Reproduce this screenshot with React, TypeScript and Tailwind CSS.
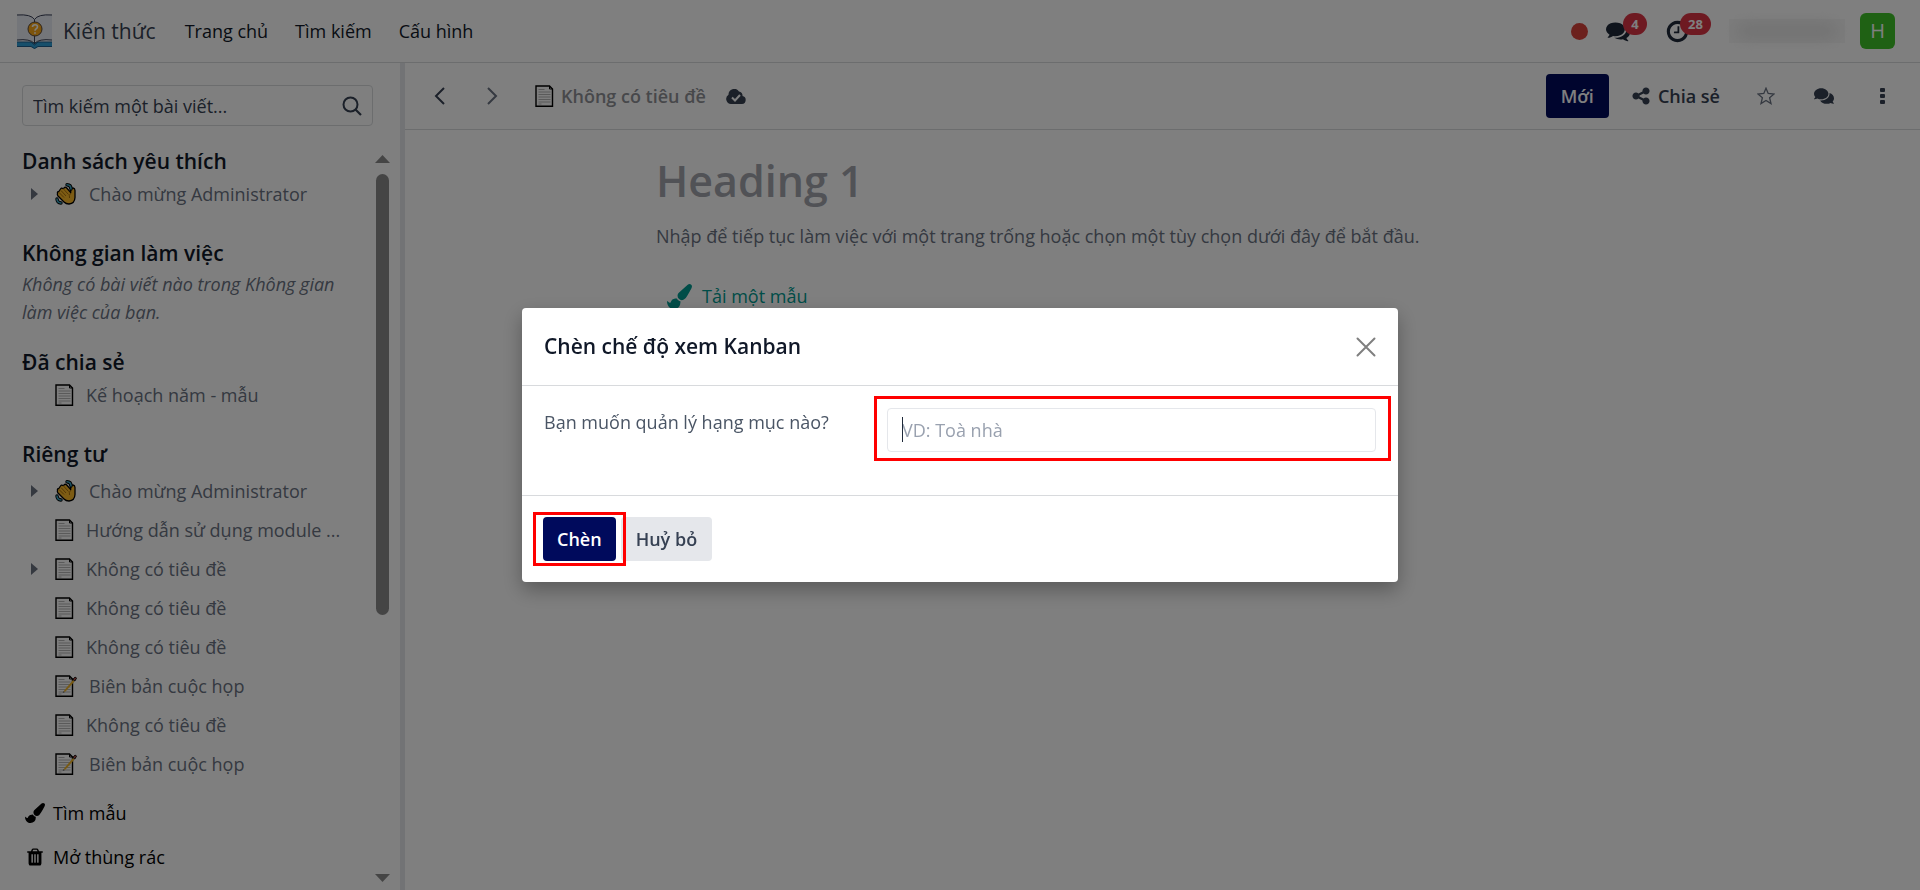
import type { ReactNode } from "react";
import { FaComments } from "react-icons/fa";

type ArticleIcon = "wave" | "page" | "memo";

interface Article {
  title: string;
  icon: ArticleIcon;
  expandable?: boolean;
}

const WELCOME: Article = {
  title: "Chào mừng Administrator",
  icon: "wave",
  expandable: true,
};

const SHARED: Article[] = [{ title: "Kế hoạch năm - mẫu", icon: "page" }];

const PRIVATE: Article[] = [
  WELCOME,
  { title: "Hướng dẫn sử dụng module ...", icon: "page" },
  { title: "Không có tiêu đề", icon: "page", expandable: true },
  { title: "Không có tiêu đề", icon: "page" },
  { title: "Không có tiêu đề", icon: "page" },
  { title: "Biên bản cuộc họp", icon: "memo" },
  { title: "Không có tiêu đề", icon: "page" },
  { title: "Biên bản cuộc họp", icon: "memo" },
];

const GLYPHS = {
  comments:
    "M1408 768q0 139-94 257t-256.5 186.5-353.5 68.5q-86 0-176-16-124 88-278 128-36 9-86 16h-3q-11 0-20.5-8t-11.5-21q-1-3-1-6.5t.5-6.5 2-6l2.5-5 3.5-5.5 4-5 4.5-5 4-4.5q5-6 23-25t26-29.5 22.5-29 25-38.5 20.5-44q-124-72-195-177t-71-224q0-139 94-257t256.5-186.5 353.5-68.5 353.5 68.5 256.5 186.5 94 257zm384 256q0 120-71 224.5t-195 176.5q10 24 20.5 44t25 38.5 22.5 29 26 29.5 23 25q1 1 4 4.5t4.5 5 4 5 3.5 5.5l2.5 5 2 6 .5 6.5-1 6.5q-3 14-13 22t-22 7q-50-7-86-16-154-40-278-128-90 16-176 16-271 0-472-132 58 4 88 4 161 0 309-45t264-129q125-92 192-212t67-254q0-77-23-152 129 71 204 178t75 230z",
  clock:
    "M1024 544v448q0 14-9 23t-23 9h-320q-14 0-23-9t-9-23v-64q0-14 9-23t23-9h224v-352q0-14 9-23t23-9h64q14 0 23 9t9 23zm416 352q0-148-73-273t-198-198-273-73-273 73-198 198-73 273 73 273 198 198 273 73 273-73 198-198 73-273zm224 0q0 209-103 385.5t-279.5 279.5-385.5 103-385.5-103-279.5-279.5-103-385.5 103-385.5 279.5-279.5 385.5-103 385.5 103 279.5 279.5 103 385.5z",
  brush:
    "M1615 0q70 0 122.5 46.5t52.5 116.5q0 63-45 151-332 629-465 752-97 91-218 91-126 0-216.5-92.5t-90.5-219.5q0-128 92-212l638-579q59-54 130-54zm-909 1034q39 76 106.5 130t150.5 76l1 71q4 213-129.5 347t-348.5 134q-123 0-218-46.5t-152.5-127.5-86.5-183-29-220q7 5 41 30t62 44.5 59 36.5 46 17q41 0 55-37 25-66 57.5-112.5t69.5-76 88-47.5 103-25.5 125-10.5z",
  share:
    "M1344 1024q133 0 226.5 93.5t93.5 226.5-93.5 226.5-226.5 93.5-226.5-93.5-93.5-226.5q0-12 2-34l-360-180q-92 86-218 86-133 0-226.5-93.5t-93.5-226.5 93.5-226.5 226.5-93.5q126 0 218 86l360-180q-2-22-2-34 0-133 93.5-226.5t226.5-93.5 226.5 93.5 93.5 226.5-93.5 226.5-226.5 93.5q-126 0-218-86l-360 180q2 22 2 34t-2 34l360 180q92-86 218-86z",
  trash:
    "M704 1376v-704q0-14-9-23t-23-9h-64q-14 0-23 9t-9 23v704q0 14 9 23t23 9h64q14 0 23-9t9-23zm256 0v-704q0-14-9-23t-23-9h-64q-14 0-23 9t-9 23v704q0 14 9 23t23 9h64q14 0 23-9t9-23zm256 0v-704q0-14-9-23t-23-9h-64q-14 0-23 9t-9 23v704q0 14 9 23t23 9h64q14 0 23-9t9-23zm-544-992h448l-48-117q-7-9-17-11h-317q-10 2-17 11zm928 32v64q0 14-9 23t-23 9h-96v948q0 83-47 143.5t-113 60.5h-832q-66 0-113-58.5t-47-141.5v-952h-96q-14 0-23-9t-9-23v-64q0-14 9-23t23-9h309l70-167q15-37 54-63t79-26h320q40 0 79 26t54 63l70 167h309q14 0 23 9t9 23z",
};

function Glyph({ name, className }: { name: keyof typeof GLYPHS; className: string }) {
  return (
    <svg viewBox="0 0 1792 1792" fill="currentColor" className={className} aria-hidden>
      <path d={GLYPHS[name]} />
    </svg>
  );
}

function PageIcon({ memo = false }: { memo?: boolean }) {
  return (
    <svg viewBox="0 0 22 22" className="h-[22px] w-[22px] shrink-0" aria-hidden>
      <path d="M1 1h13.500L17.500 4V21.300H1z" fill="#fafafa" stroke="#000" strokeWidth="1.400" />
      <path d="M14.500 1v3h3" fill="none" stroke="#000" strokeWidth="1" />
      <path
        d="M3.500 4.500h6M3.500 7h12M3.500 9.500h12M3.500 12h12M3.500 14.500h12M3.500 17h12M3.500 19h3"
        stroke="#b4b4b4"
        strokeWidth="1"
      />
      {memo && (
        <>
          <path d="M8.500 17l1-2L18 5l1.500 1.500L10.500 16.500z" fill="#f0b429" />
          <path d="M18 4.500l1.500-2q1.500-.8 2 .8L19.800 6z" fill="#c0504d" stroke="#000" strokeWidth="1" />
          <path d="M7.500 18.200l1-2.200 1.300 1.200z" fill="#777" />
        </>
      )}
    </svg>
  );
}

function WaveIcon() {
  return (
    <svg viewBox="0 0 22 22" className="h-[22px] w-[22px] shrink-0" aria-hidden>
      <path
        d="M2.500 10.500q-.5-1.800 1.300-2L5.500 6q.8-1.500 2.300-.5L9 5q1.200-1.300 2.500-.2l4.200 4.700V7q.3-2.200 2.300-2 2 .3 2 2.500v7q-.3 6-6 6.500-3 0-5-2l-6-6q-1-1.300-.5-2.500z"
        fill="#fbb829"
        stroke="#000"
        strokeWidth="1.300"
        strokeLinejoin="round"
      />
      <path
        d="M4 9.500l5 5M6 7.500l5 5.500M8.500 6l5 5.500M16 10q-2.500 2-1.500 5"
        fill="none"
        stroke="#a8700c"
        strokeWidth="1"
      />
      <g fill="none" strokeLinecap="round">
        <path d="M12 1.800q4 .2 4 4.200M2 16q.2 3.800 4 4" stroke="#000" strokeWidth="3.400" />
        <path d="M12 1.800q4 .2 4 4.200M2 16q.2 3.800 4 4" stroke="#3aa5c4" strokeWidth="1.600" />
      </g>
    </svg>
  );
}

function AppLogo() {
  return (
    <svg viewBox="0 0 35 35" className="h-[35px] w-[35px]" aria-hidden>
      <path d="M0 0h35v27H0z" fill="#e9edf5" />
      <path d="M6 0Q15 .500 17.500 5 20 .500 29 0z" fill="#fff" />
      <path d="M0 28h35v4.500H21L17.500 35 14 32.500H0z" fill="#2f9fd6" />
      <path d="M0 28h14l3.500 3L21 28h14M0 32.500h14l3.500 2 3.500-2h14" stroke="#1f5f8f" fill="none" />
      <path
        d="M0 1q14-1 17.500 4.500Q21 0 35 1M17.500 5.500V9M17.500 21v9M0 26q13-1.500 17.500 3.500Q22 24.500 35 26"
        fill="none"
        stroke="#3c4257"
        strokeWidth="1"
      />
      <circle cx="18" cy="15" r="7" fill="#fba919" stroke="#5c4a3a" />
      <path
        d="M15.500 13q0-2.300 2.500-2.300t2.500 2.100q0 1.200-1.300 2-1.200.7-1.200 2M18 18.300v1.400"
        fill="none"
        stroke="#fff"
        strokeWidth="1.600"
      />
    </svg>
  );
}

function CloudIcon() {
  return (
    <svg viewBox="0 0 20 15" className="h-[15px] w-5" aria-hidden>
      <path
        d="M5 15a5 5 0 0 1-2.500-9.200A5.700 5.700 0 0 1 13 2.500a4 4 0 0 1 3.500 4.600A4 4 0 0 1 16 15z"
        fill="#374151"
      />
      <path d="M6 8.500l3 3 5-5.500" fill="none" stroke="#fff" strokeWidth="2" />
    </svg>
  );
}

function ArticleRow({ article, className }: { article: Article; className: string }) {
  return (
    <li className={`flex items-center pl-[9px] ${className}`}>
      <span className="flex w-6 shrink-0">
        {article.expandable && (
          <svg viewBox="0 0 7 12" className="h-3 w-[7px]" aria-hidden>
            <path d="M0 0l7 6-7 6z" fill="#6b7280" />
          </svg>
        )}
      </span>
      <a href="#" className="flex items-center whitespace-nowrap">
        {article.icon === "wave" ? <WaveIcon /> : <PageIcon memo={article.icon === "memo"} />}
        <span className={article.icon === "page" ? "pl-[9px]" : "pl-3"}>{article.title}</span>
      </a>
    </li>
  );
}

function SectionTitle({ children }: { children: ReactNode }) {
  return <h2 className="text-[21px] font-semibold leading-[30px] text-gray-900">{children}</h2>;
}

function Navbar() {
  return (
    <header className="flex h-[63px] shrink-0 items-center border-b border-[#d8dadd] pl-[17px] pr-[25px]">
      <AppLogo />
      <a href="#" className="ml-[11px] text-[21px] text-gray-700">
        Kiến thức
      </a>
      <nav className="ml-[29px] flex gap-[27px] text-gray-900">
        <a href="#">Trang chủ</a>
        <a href="#">Tìm kiếm</a>
        <a href="#">Cấu hình</a>
      </nav>
      <div className="ml-auto flex items-center">
        <span className="h-[17px] w-[17px] rounded-full bg-[#d8433b]" />
        <button type="button" aria-label="Tin nhắn" className="relative ml-[18px] text-gray-800">
          <Glyph name="comments" className="h-6 w-6" />
          <span className="absolute -top-1.5 left-[17px] h-[22px] w-6 rounded-full bg-[#dc3545] text-center text-[13px] font-bold leading-[22px] text-white">
            4
          </span>
        </button>
        <button type="button" aria-label="Hoạt động" className="relative ml-[35px] text-gray-800">
          <Glyph name="clock" className="h-[25px] w-[25px]" />
          <span className="absolute -top-1.5 left-[15px] h-[22px] w-[31px] rounded-full bg-[#dc3545] text-center text-[13px] font-bold leading-[22px] text-white">
            28
          </span>
        </button>
        <span className="ml-[39px] flex h-6 w-[116px] items-center bg-[#f8f8f8] px-2">
          <span className="h-3 w-full rounded-full bg-[#dedede] blur-sm" />
        </span>
        <button
          type="button"
          aria-label="Tài khoản"
          className="ml-[15px] h-9 w-[35px] rounded-md bg-[#3fc328] text-xl text-white"
        >
          H
        </button>
      </div>
    </header>
  );
}

function ScrollBar() {
  return (
    <div className="flex w-[15px] flex-col items-center pb-2 pt-[9px]" aria-hidden>
      <svg viewBox="0 0 15 8" className="h-2 w-[15px] shrink-0">
        <path d="M0 8l7.500-8L15 8z" fill="#8b8b8b" />
      </svg>
      <div className="my-[11px] flex-1">
        <div className="h-[64%] w-[13px] rounded-full bg-[#8b8b8b]" />
      </div>
      <svg viewBox="0 0 15 8" className="h-2 w-[15px] shrink-0">
        <path d="M0 0l7.500 8L15 0z" fill="#8b8b8b" />
      </svg>
    </div>
  );
}

function Sidebar() {
  return (
    <aside className="flex w-[405px] shrink-0 flex-col border-r-[5px] border-gray-200">
      <label className="ml-[22px] mr-[27px] mt-[22px] flex h-[41px] items-center rounded border border-[#d8dadd] px-[10px]">
        <input
          type="text"
          aria-label="Tìm kiếm một bài viết"
          placeholder="Tìm kiếm một bài viết..."
          className="min-w-0 flex-1 outline-none placeholder:text-gray-700"
        />
        <svg viewBox="0 0 20 20" className="h-5 w-5 text-gray-700" fill="none" stroke="currentColor" aria-hidden>
          <circle cx="8.500" cy="8.500" r="7" strokeWidth="2" />
          <path d="M13.500 13.500l5.500 5.500" strokeWidth="2.200" />
        </svg>
      </label>
      <div className="mt-5 flex flex-1">
        <div className="min-w-0 flex-1 pl-[22px] text-gray-500">
          <SectionTitle>Danh sách yêu thích</SectionTitle>
          <ul className="mb-[26px]">
            <ArticleRow article={WELCOME} className="h-9" />
          </ul>
          <SectionTitle>Không gian làm việc</SectionTitle>
          <p className="mb-[21px] mt-0.5 pr-5 italic leading-7">
            Không có bài viết nào trong Không gian làm việc của bạn.
          </p>
          <SectionTitle>Đã chia sẻ</SectionTitle>
          <ul className="mb-[26px]">
            {SHARED.map((article) => (
              <ArticleRow key={article.title} article={article} className="h-9" />
            ))}
          </ul>
          <SectionTitle>Riêng tư</SectionTitle>
          <ul className="mb-2 mt-0.5">
            {PRIVATE.map((article, i) => (
              <ArticleRow key={i} article={article} className="h-[39px]" />
            ))}
          </ul>
          <a href="#" className="flex h-11 items-center gap-2 pl-[3px] text-black">
            <Glyph name="brush" className="h-5 w-5" />
            Tìm mẫu
          </a>
          <a href="#" className="flex h-11 items-center gap-2 pl-[3px] text-black">
            <Glyph name="trash" className="h-5 w-5" />
            Mở thùng rác
          </a>
        </div>
        <div className="mr-[10px] flex">
          <ScrollBar />
        </div>
      </div>
    </aside>
  );
}

function ControlPanel() {
  return (
    <div className="flex h-[67px] items-center border-b border-[#d8dadd] pl-[29px] pr-[35px] text-gray-700">
      <button type="button" aria-label="Trước">
        <svg viewBox="0 0 11 18" className="h-[18px] w-[11px]" fill="none" stroke="currentColor" strokeWidth="2" aria-hidden>
          <path d="M10 1L2 9l8 8" />
        </svg>
      </button>
      <button type="button" aria-label="Sau" className="ml-[42px] text-gray-500">
        <svg viewBox="0 0 11 18" className="h-[18px] w-[11px]" fill="none" stroke="currentColor" strokeWidth="2" aria-hidden>
          <path d="M1 1l8 8-8 8" />
        </svg>
      </button>
      <span className="ml-[37px] flex items-center gap-1 font-semibold text-[#8f9196]">
        <PageIcon />
        Không có tiêu đề
      </span>
      <span className="ml-5">
        <CloudIcon />
      </span>
      <div className="ml-auto flex items-center">
        <button type="button" className="h-11 rounded bg-[#000a5c] px-[15px] font-semibold text-white">
          Mới
        </button>
        <button type="button" className="ml-[22px] flex items-center gap-[7px] font-semibold">
          <Glyph name="share" className="h-5 w-5" />
          Chia sẻ
        </button>
        <button type="button" aria-label="Yêu thích" className="ml-[37px] text-gray-500">
          <svg viewBox="0 0 18 18" className="h-[18px] w-[18px]" fill="none" stroke="currentColor" strokeWidth="1.300" aria-hidden>
            <path d="M9 1.200l2.200 5.300 5.900.500-4.500 3.700 1.400 5.900L9 13.500l-5 3.100 1.400-5.900L.9 7l5.900-.5z" />
          </svg>
        </button>
        <button type="button" aria-label="Bình luận" className="ml-[39px]">
          <FaComments className="h-5 w-5" />
        </button>
        <button type="button" aria-label="Thêm" className="ml-[46px]">
          <svg viewBox="0 0 5 16" className="h-4 w-[5px]" fill="currentColor" aria-hidden>
            <rect width="5" height="4" rx="1" />
            <rect y="6" width="5" height="4" rx="1" />
            <rect y="12" width="5" height="4" rx="1" />
          </svg>
        </button>
      </div>
    </div>
  );
}

function Editor() {
  return (
    <main className="min-w-0 flex-1">
      <ControlPanel />
      <div className="mx-auto max-w-[1013px] pt-[21px]">
        <h1 className="text-[43px] font-semibold leading-[60px] text-[#a2a4ac]">Heading 1</h1>
        <p className="mt-[11px] leading-7 text-gray-500">
          Nhập để tiếp tục làm việc với một trang trống hoặc chọn một tùy chọn dưới đây để bắt đầu.
        </p>
        <a href="#" className="ml-[11px] mt-8 flex items-center gap-2.5 leading-7 text-[#019a90]">
          <Glyph name="brush" className="h-[25px] w-[25px]" />
          Tải một mẫu
        </a>
      </div>
    </main>
  );
}

function Highlight({ className }: { className: string }) {
  return (
    <span
      className={`pointer-events-none absolute border-[3px] border-[#ff0000] ${className}`}
      aria-hidden
    />
  );
}

function InsertKanbanDialog() {
  return (
    <div className="fixed inset-0 flex items-center justify-center bg-black/50">
      <div
        role="dialog"
        aria-modal="true"
        aria-labelledby="dialog-title"
        className="w-full max-w-[876px] rounded bg-white text-gray-600 shadow-[0_8px_20px_rgba(0,0,0,0.3)]"
      >
        <div className="flex h-[78px] items-center justify-between border-b border-[#d8dadd] px-[22px]">
          <h2 id="dialog-title" className="text-[21px] font-semibold text-gray-900">
            Chèn chế độ xem Kanban
          </h2>
          <button type="button" aria-label="Đóng" className="text-[#7f7f7f]">
            <svg viewBox="0 0 20 20" className="h-5 w-5" fill="none" stroke="currentColor" strokeWidth="2" strokeLinecap="round" aria-hidden>
              <path d="M1.500 1.500l17 17M18.500 1.500l-17 17" />
            </svg>
          </button>
        </div>
        <div className="flex h-[110px] justify-between border-b border-[#d8dadd] px-[22px] pt-[22px]">
          <label htmlFor="item-label" className="leading-7">
            Bạn muốn quản lý hạng mục nào?
          </label>
          <div className="relative h-11 w-[489px]">
            <input
              id="item-label"
              type="text"
              placeholder="VD: Toà nhà"
              className="h-full w-full rounded border border-gray-200 px-[14px] outline-none placeholder:text-gray-400"
            />
            <span className="absolute left-[15px] top-[9px] h-[25px] w-px bg-gray-800" aria-hidden />
            <Highlight className="-bottom-[9px] -left-[13px] -right-[15px] -top-[12px]" />
          </div>
        </div>
        <div className="flex h-[86px] items-center gap-[5px] px-[21px] font-semibold">
          <div className="relative z-10">
            <button type="button" className="h-11 rounded bg-[#000a5c] px-[14px] text-white">
              Chèn
            </button>
            <Highlight className="-inset-x-[10px] -inset-y-[5px]" />
          </div>
          <button type="button" className="h-11 rounded bg-gray-200 px-[15px] text-gray-700">
            Huỷ bỏ
          </button>
        </div>
      </div>
    </div>
  );
}

export default function App() {
  return (
    <div className="flex min-h-screen flex-col bg-white font-['Open_Sans',sans-serif] text-lg">
      <Navbar />
      <div className="flex flex-1">
        <Sidebar />
        <Editor />
      </div>
      <InsertKanbanDialog />
    </div>
  );
}
